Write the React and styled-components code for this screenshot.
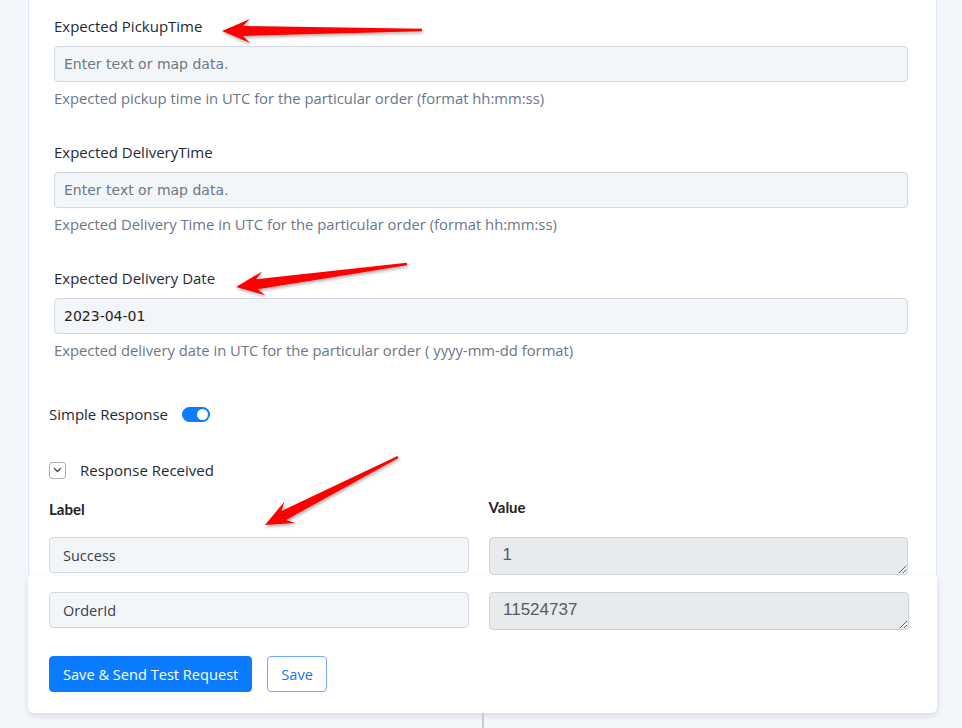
import React from "react";
import styled, { createGlobalStyle } from "styled-components";

const Global = createGlobalStyle`
  html, body { margin: 0; padding: 0; }
  body {
    background: #f3f6fa;
    font-family: "Open Sans", Lato, sans-serif;
    color: #1f2933;
    overflow: hidden;
  }
  * { box-sizing: border-box; }
`;

const Page = styled.div`
  position: relative;
  width: 962px;
  height: 728px;
  overflow: hidden;
`;

const Sheet = styled.div`
  margin-left: 28px;
  width: 909px;
`;

const FieldsPanel = styled.section`
  background: #fff;
  border-left: 1px solid #dbe6f6;
  border-right: 1px solid #dbe6f6;
  padding: 16px 28px 1px 20px;
`;

const FooterPanel = styled.section`
  background: #fff;
  border-radius: 0 0 6px 6px;
  box-shadow: 0 3px 6px rgba(30, 45, 70, 0.12);
  padding: 16px 28px 21px 21px;
`;

const Field = styled.div`
  margin: 0 0 34px 5px;
  &:last-of-type { margin-bottom: 0; }
`;

const FieldLabel = styled.div`
  font-size: 15px;
  line-height: 20px;
  color: #1f2933;
  margin-bottom: 10px;
`;

const TextInput = styled.input`
  display: block;
  width: 100%;
  height: 36px;
  padding: 0 9px;
  background: #f3f6f9;
  border: 1px solid #d3d9e0;
  border-radius: 4px;
  font-family: "DejaVu Sans", sans-serif;
  font-size: 14px;
  color: #222;
  outline: none;
  &::placeholder { color: #6d7785; }
`;

const Help = styled.div`
  margin-top: 6px;
  font-size: 14.8px;
  line-height: 20px;
  color: #6b7788;
`;

const SwitchRow = styled.div`
  display: flex;
  align-items: center;
  gap: 14px;
  margin-top: 44px;
  font-size: 15px;
  line-height: 20px;
  color: #1f2933;
`;

const Switch = styled.span`
  position: relative;
  width: 28px;
  height: 15px;
  border-radius: 8px;
  background: ${(p) => (p.$on ? "#0b7bff" : "#c9cfd6")};
  &::after {
    content: "";
    position: absolute;
    top: 2px;
    left: ${(p) => (p.$on ? "15px" : "2px")};
    width: 11px;
    height: 11px;
    border-radius: 50%;
    background: #fff;
  }
`;

const Collapse = styled.div`
  display: flex;
  align-items: center;
  gap: 14px;
  margin-top: 36px;
  font-size: 15px;
  line-height: 20px;
  color: #1f2933;
`;

const ChevronBox = styled.span`
  display: flex;
  align-items: center;
  justify-content: center;
  width: 17px;
  height: 17px;
  border: 1px solid #a9b0b9;
  border-radius: 3px;
  background: #fff;
`;

const Grid = styled.div`
  display: grid;
  grid-template-columns: 1fr 1fr;
  column-gap: 20px;
  align-items: start;
`;

const ColHead = styled.div`
  margin-top: ${(p) => p.$top || "19px"};
  margin-bottom: 18px;
  font-family: Lato, sans-serif;
  font-size: 15px;
  font-weight: 700;
  line-height: 20px;
  color: #1f2328;
`;

const PairInput = styled.input`
  display: block;
  width: 100%;
  height: 36px;
  padding: 0 13px;
  background: #f3f6f9;
  border: 1px solid #d3d9e0;
  border-radius: 4px;
  font-family: "Open Sans", sans-serif;
  font-size: 14.5px;
  color: #3a3f45;
  outline: none;
`;

const ValueArea = styled.textarea`
  display: block;
  width: 100%;
  height: 38px;
  padding: 6px 13px;
  background: #e8ebee;
  border: 1px solid #ccd2d9;
  border-radius: 4px;
  font-family: "Liberation Sans", Arial, sans-serif;
  font-size: 17px;
  line-height: 22px;
  color: #555b62;
  resize: vertical;
  outline: none;
`;

const Actions = styled.div`
  display: flex;
  gap: 15px;
  margin-top: 26px;
`;

const Button = styled.button`
  height: 36px;
  padding: 0 13px;
  border-radius: 4px;
  font-family: "Open Sans", sans-serif;
  font-size: 14.6px;
  font-weight: 500;
  cursor: pointer;
  background: ${(p) => (p.$primary ? "#0b7bff" : "#fff")};
  color: ${(p) => (p.$primary ? "#fff" : "#1a74f0")};
  border: 1px solid ${(p) => (p.$primary ? "#0b7bff" : "#6eaaff")};
`;

const Connector = styled.div`
  margin-left: 454px;
  width: 2px;
  height: 20px;
  background: #c9cdd3;
`;

const Overlay = styled.svg`
  position: absolute;
  inset: 0;
  pointer-events: none;
`;

const fields = [
  {
    label: "Expected PickupTime",
    value: "",
    help: "Expected pickup time in UTC for the particular order (format hh:mm:ss)",
  },
  {
    label: "Expected DeliveryTime",
    value: "",
    help: "Expected Delivery Time in UTC for the particular order (format hh:mm:ss)",
  },
  {
    label: "Expected Delivery Date",
    value: "2023-04-01",
    help: "Expected delivery date in UTC for the particular order ( yyyy-mm-dd format)",
  },
];

// callout arrows: tip point, tail point
const arrows = [
  { tip: [222, 31], tail: [422, 30] },
  { tip: [236, 287], tail: [407, 264] },
  { tip: [265, 525], tail: [398, 457] },
];

function arrowPoints({ tip, tail }) {
  const dx = tail[0] - tip[0];
  const dy = tail[1] - tip[1];
  const len = Math.hypot(dx, dy);
  const ux = dx / len;
  const uy = dy / len;
  const nx = -uy;
  const ny = ux;
  const at = (a, b) => [tip[0] + ux * a + nx * b, tip[1] + uy * a + ny * b];
  const pts = [
    tip,
    at(28, 12),
    at(21, 5),
    [tail[0] + nx * 1.2, tail[1] + ny * 1.2],
    [tail[0] - nx * 1.2, tail[1] - ny * 1.2],
    at(21, -5),
    at(28, -12),
  ];
  return pts.map((p) => p.map((v) => v.toFixed(1)).join(",")).join(" ");
}

function Chevron() {
  return (
    <svg width="9" height="6" viewBox="0 0 9 6">
      <path d="M1.5 1.5l3 3 3-3" fill="none" stroke="#444" strokeWidth="1.3" strokeLinecap="round" strokeLinejoin="round" />
    </svg>
  );
}

export default function App() {
  return (
    <Page>
      <Global />
      <Sheet>
        <FieldsPanel>
          {fields.map((f) => (
            <Field key={f.label}>
              <FieldLabel>{f.label}</FieldLabel>
              <TextInput placeholder="Enter text or map data." defaultValue={f.value} />
              <Help>{f.help}</Help>
            </Field>
          ))}
          <SwitchRow>
            Simple Response
            <Switch $on />
          </SwitchRow>
          <Collapse>
            <ChevronBox>
              <Chevron />
            </ChevronBox>
            Response Received
          </Collapse>
          <Grid>
            <ColHead>Label</ColHead>
            <ColHead $top="17px">Value</ColHead>
            <PairInput defaultValue="Success" />
            <ValueArea readOnly defaultValue="1" />
          </Grid>
        </FieldsPanel>
        <FooterPanel>
          <Grid>
            <PairInput defaultValue="OrderId" />
            <ValueArea readOnly defaultValue="11524737" />
          </Grid>
          <Actions>
            <Button $primary>Save &amp; Send Test Request</Button>
            <Button>Save</Button>
          </Actions>
        </FooterPanel>
        <Connector />
      </Sheet>
      <Overlay width="962" height="728">
        <defs>
          <filter id="arrowShade" x="-20%" y="-50%" width="140%" height="200%">
            <feDropShadow dx="1" dy="2" stdDeviation="1.5" floodColor="#000" floodOpacity="0.3" />
          </filter>
        </defs>
        {arrows.map((a, i) => (
          <polygon key={i} points={arrowPoints(a)} fill="#ff0000" filter="url(#arrowShade)" />
        ))}
      </Overlay>
    </Page>
  );
}
